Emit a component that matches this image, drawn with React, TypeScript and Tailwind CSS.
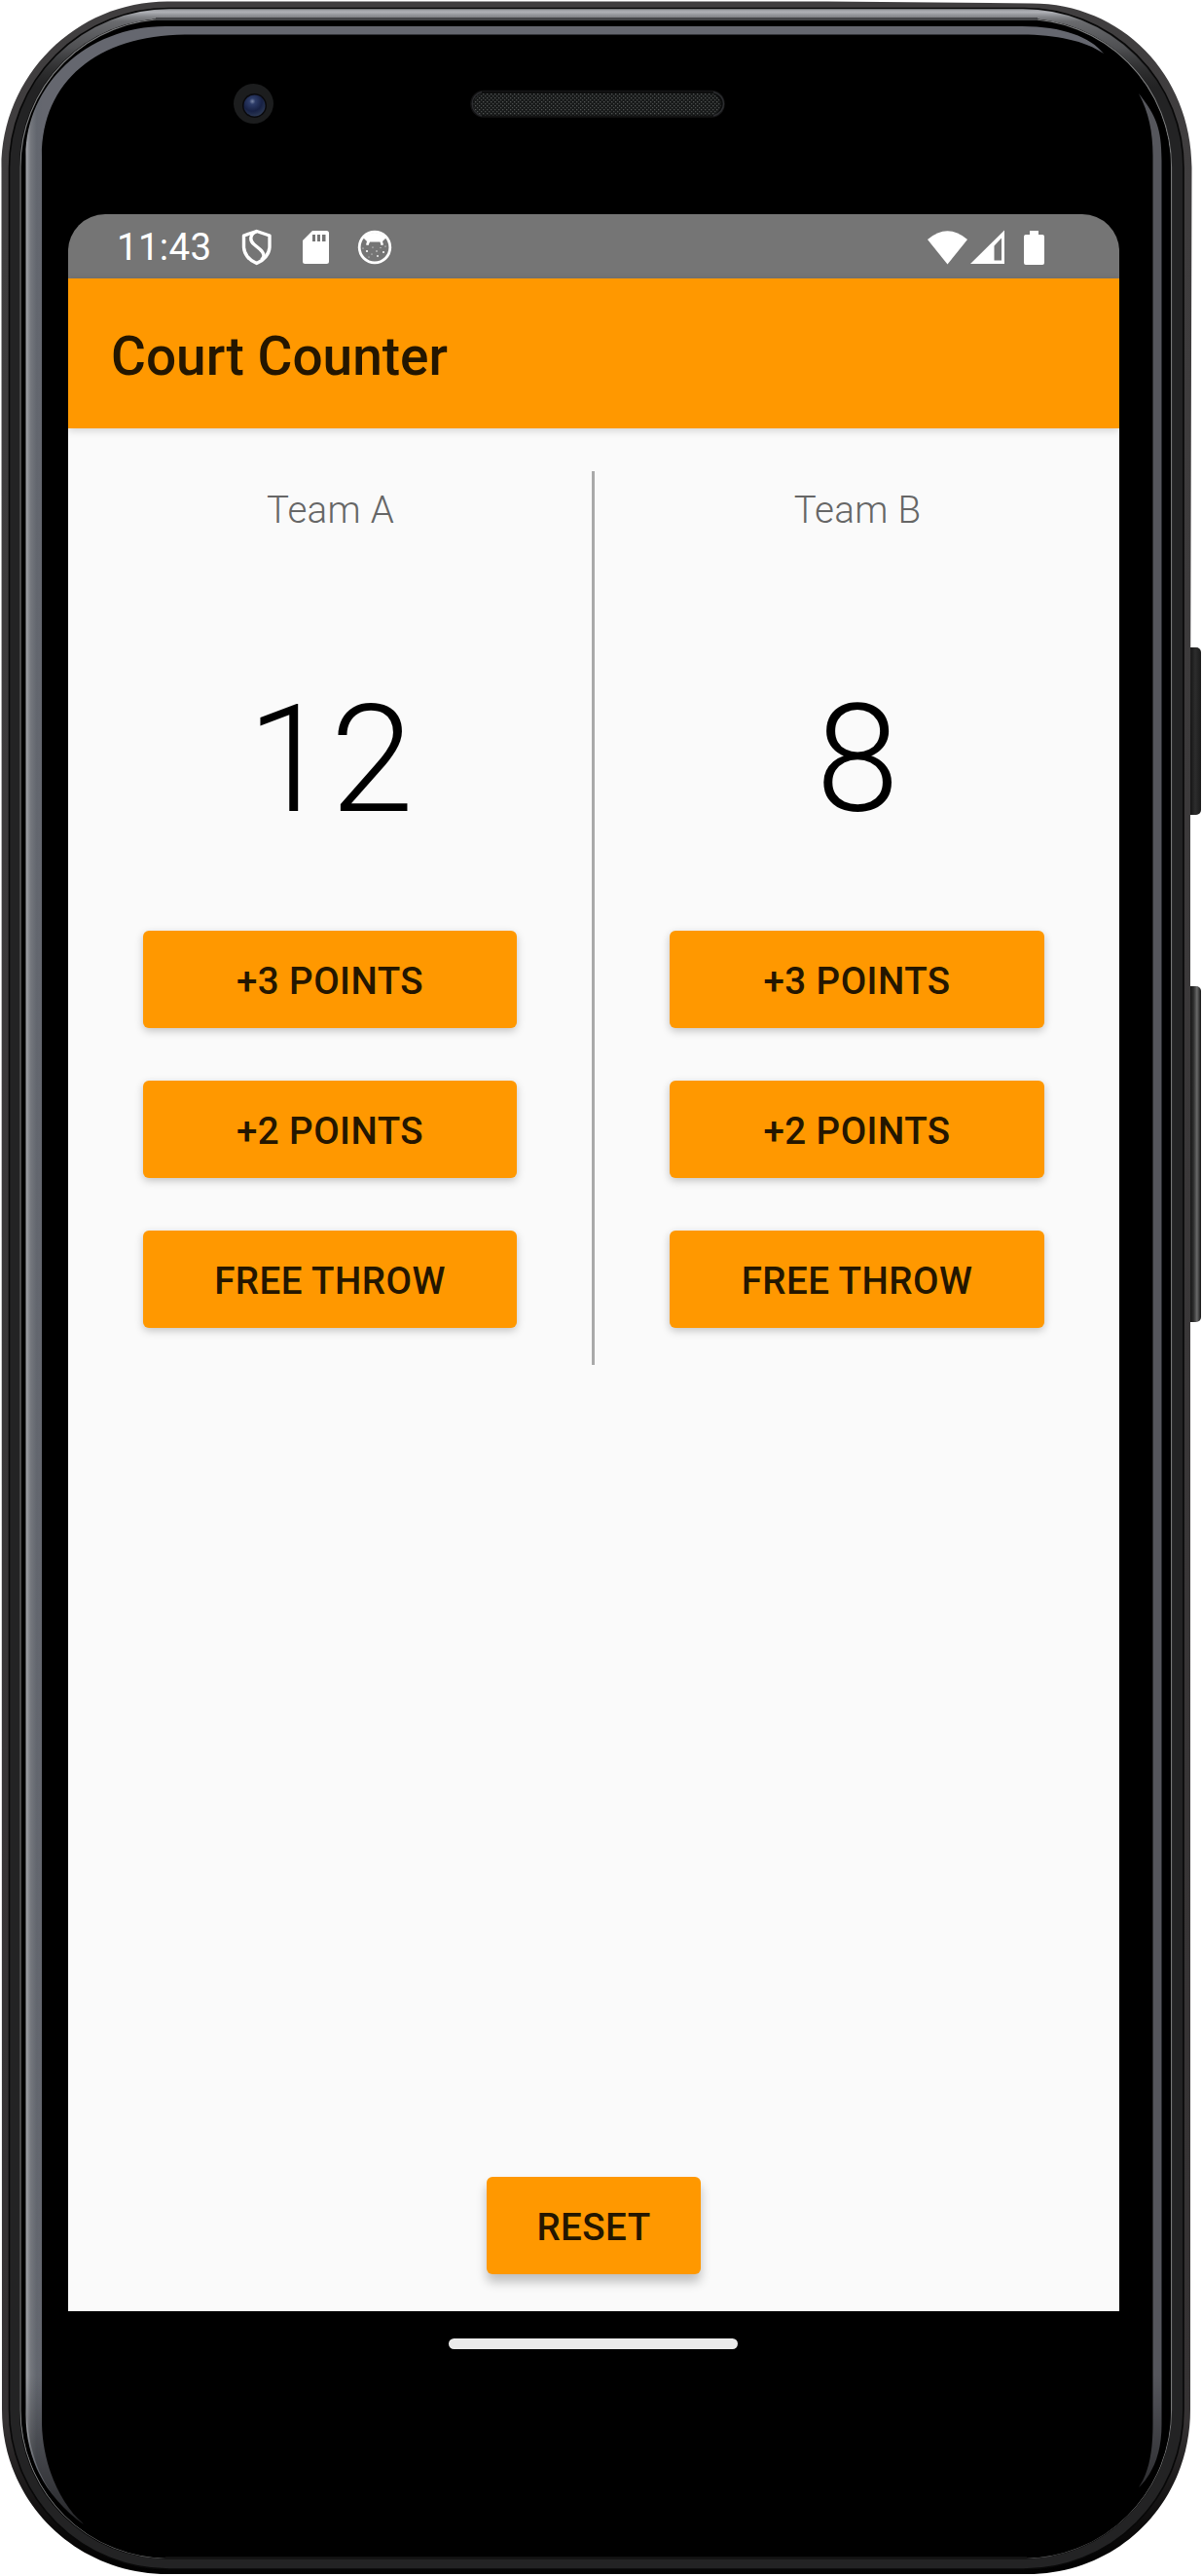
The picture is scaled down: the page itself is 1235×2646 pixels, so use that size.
import { useState } from "react";

function PhoneHardware() {
  return (
    <svg
      className="absolute inset-0"
      width="1235"
      height="2646"
      viewBox="0 0 1235 2646"
      fill="none"
      aria-hidden="true"
    >
      <defs>
        <linearGradient id="rim" x1="0" y1="0" x2="0" y2="2646" gradientUnits="userSpaceOnUse">
          <stop offset="0" stopColor="#403e3f" />
          <stop offset="0.94" stopColor="#353233" />
          <stop offset="0.98" stopColor="#0c0b0b" />
          <stop offset="1" stopColor="#000" />
        </linearGradient>
        <linearGradient id="glow" x1="0" y1="9" x2="0" y2="90" gradientUnits="userSpaceOnUse">
          <stop offset="0" stopColor="#8a8c90" />
          <stop offset="0.04" stopColor="#b0b2b7" />
          <stop offset="0.1" stopColor="#85878b" />
          <stop offset="0.16" stopColor="#6a6b6e" />
          <stop offset="0.5" stopColor="#5a5b5e" stopOpacity="0.8" />
          <stop offset="1" stopColor="#333" stopOpacity="0" />
        </linearGradient>
        <linearGradient id="edge" x1="26" y1="0" x2="44" y2="0" gradientUnits="userSpaceOnUse">
          <stop offset="0" stopColor="#a9abb0" />
          <stop offset="0.3" stopColor="#75787e" />
          <stop offset="0.65" stopColor="#62666e" />
          <stop offset="1" stopColor="#65676f" />
        </linearGradient>
        <linearGradient id="fade" x1="0" y1="2440" x2="0" y2="2600" gradientUnits="userSpaceOnUse">
          <stop offset="0" stopColor="#000" stopOpacity="0" />
          <stop offset="1" stopColor="#000" stopOpacity="0.65" />
        </linearGradient>
        <linearGradient id="power" x1="1222" y1="0" x2="1234" y2="0" gradientUnits="userSpaceOnUse">
          <stop offset="0" stopColor="#101010" />
          <stop offset="0.5" stopColor="#2d2d2d" />
          <stop offset="1" stopColor="#1b1b1b" />
        </linearGradient>
        <linearGradient id="volume" x1="1222" y1="0" x2="1234" y2="0" gradientUnits="userSpaceOnUse">
          <stop offset="0" stopColor="#101010" />
          <stop offset="0.35" stopColor="#2d2d2d" />
          <stop offset="0.65" stopColor="#696969" />
          <stop offset="1" stopColor="#151515" />
        </linearGradient>
        <radialGradient id="lens" cx="0.4" cy="0.3" r="0.7">
          <stop offset="0" stopColor="#7b88a8" />
          <stop offset="0.2" stopColor="#2d3c68" />
          <stop offset="0.65" stopColor="#172144" />
          <stop offset="1" stopColor="#2b3752" />
        </radialGradient>
        <pattern id="mesh" width="4" height="4" patternUnits="userSpaceOnUse">
          <rect width="4" height="4" fill="#171919" />
          <rect width="1.3" height="1.3" fill="#525554" />
          <rect x="2" y="2" width="1.3" height="1.3" fill="#484b4a" />
        </pattern>
      </defs>

      <rect x="1218" y="665" width="16" height="172" rx="5" fill="url(#power)" />
      <rect x="1218" y="1013" width="16" height="345" rx="5" fill="url(#volume)" />

      <path
        d="M172 1.5H850L1060 3.5C1152 3.5 1224 76 1224.5 172L1223 760V2475C1223 2570 1150 2644 1056 2644H172C78 2644 2 2570 2 2475L1.5 172C1.5 78 78 1.5 172 1.5Z"
        fill="url(#rim)"
      />
      <rect x="9.5" y="8.5" width="1206.5" height="2630.5" rx="164" fill="#232324" stroke="#080808" strokeWidth="1.6" />
      <rect x="15" y="14" width="1195" height="2619" rx="159" stroke="url(#glow)" strokeWidth="9.5" />
      <rect x="20" y="19" width="1184" height="2609.5" rx="152" fill="#000" />
      <rect x="21" y="19.5" width="1182.5" height="2608" rx="152" stroke="#777879" strokeWidth="1.2" />
      <path d="M160 19.5H1066" stroke="#444548" strokeWidth="3" />
      <rect x="23.5" y="22.5" width="1178" height="2604" rx="150" stroke="#000" strokeWidth="3" />
      <path d="M170 2627.5H1055" stroke="#141415" strokeWidth="2.5" />

      <path
        d="M86 2593C50 2567 26.500 2530 26.500 2480V160C26.500 88 88 27 170 27H1050C1092 27 1120 38 1134 55C1115 42 1085 35.500 1050 35.500H190C100 36 43 84 43 160V2490C44 2530 60 2570 86 2593Z"
        fill="url(#edge)"
      />
      <path
        d="M88 2595C48 2567 25 2530 25 2440H44V2490C45 2530 60 2570 88 2595Z"
        fill="url(#fade)"
      />
      <path
        d="M1170 96C1188 119 1193.500 132 1193.500 165V2490C1193.500 2520 1185 2540 1170 2555C1180 2540 1184.500 2520 1184.500 2490V160C1184.500 135 1180 115 1170 96Z"
        fill="#55565c"
      />
      <path
        d="M1194 2440V2490C1194 2520 1186 2540 1169 2556C1180 2540 1184 2520 1184 2440Z"
        fill="url(#fade)"
      />

      <circle cx="260.500" cy="106.500" r="20.500" fill="#1c1d1e" />
      <circle cx="261.500" cy="108.500" r="12.500" fill="#09090c" />
      <circle cx="261.500" cy="108.500" r="11" fill="url(#lens)" />

      <rect x="484" y="93.500" width="260" height="26.500" rx="13" fill="#0c0d0d" stroke="#141415" strokeWidth="1.500" />
      <rect x="486.500" y="96" width="254" height="22.500" rx="11" fill="url(#mesh)" />
      <path d="M495 94.500C482 98 482 115 495 119M733 94.500C747 98 747 115 733 119" stroke="#2c2d30" strokeWidth="1.500" />
    </svg>
  );
}

function ShieldIcon() {
  return (
    <svg width="32" height="38" viewBox="0 0 32 38" fill="none" stroke="#fff" strokeWidth="3.400" strokeLinejoin="round">
      <path d="M15.700 2.500L29 7V18C29 26 23 32.500 15.700 35.500C8 32.500 2.500 26 2.500 18V7Z" />
      <path d="M15.500 3C9 5 8 12 13 16L19 21C24 25.500 24 29 20.500 32" />
    </svg>
  );
}

function SdCardIcon() {
  return (
    <svg width="28" height="36" viewBox="0 0 28 36">
      <path
        fill="#fff"
        fillRule="evenodd"
        d="M10 1H24.500Q27 1 27 3.500V32.500Q27 35 24.500 35H2.500Q0 35 0 32.500V11ZM10 5V12H13V5ZM15 5V12H18V5ZM20 5V12H23.500V5Z"
      />
    </svg>
  );
}

function CookieIcon() {
  return (
    <svg width="36" height="36" viewBox="0 0 36 36">
      <circle cx="18" cy="18" r="15.800" fill="none" stroke="#fff" strokeWidth="2.800" />
      <path
        d="M6 8Q18 -2 30 8L26 12L27 15.500L24.500 16L23.500 12.500H13L11.500 16L9 15.500L10 12Z"
        fill="#fff"
      />
      <g fill="#fff">
        <circle cx="10" cy="22" r="1.100" />
        <circle cx="16" cy="18" r="0.600" />
        <circle cx="20" cy="22" r="0.700" />
        <circle cx="27" cy="23" r="1" />
        <circle cx="6" cy="19" r="0.600" />
        <circle cx="15" cy="25" r="0.600" />
        <circle cx="21" cy="27" r="0.900" />
        <circle cx="24" cy="18.500" r="0.500" />
        <circle cx="12" cy="28" r="0.500" />
        <circle cx="29" cy="17" r="0.600" />
      </g>
    </svg>
  );
}

function WifiIcon() {
  return (
    <svg width="42" height="35" viewBox="0 0 42 35">
      <path d="M0 9Q20.500 -8.500 41 9L20.500 34.500Z" fill="#fff" />
    </svg>
  );
}

function SignalIcon() {
  return (
    <svg width="36" height="36" viewBox="0 0 36 36">
      <path d="M35 0.500V35H0ZM32 8.500L24.500 16.500V31.500H32Z" fill="#fff" fillRule="evenodd" />
    </svg>
  );
}

function BatteryIcon() {
  return (
    <svg width="21" height="35" viewBox="0 0 21 35">
      <path d="M6 0H15V4H19Q21 4 21 6V33Q21 35 19 35H2Q0 35 0 33V6Q0 4 2 4H6Z" fill="#fff" />
    </svg>
  );
}

function StatusBar() {
  return (
    <div className="flex h-[66px] items-center bg-[#757575] pr-[77px] pl-[50px] pt-[2px] text-white">
      <span className="w-[128px] pt-px text-[38.5px] leading-none tracking-[0.3px]">11:43</span>
      <ShieldIcon />
      <div className="w-[31px]" />
      <SdCardIcon />
      <div className="w-[28px]" />
      <CookieIcon />
      <div className="ml-auto flex items-center">
        <WifiIcon />
        <div className="w-[2px]" />
        <SignalIcon />
        <div className="w-[19px]" />
        <BatteryIcon />
      </div>
    </div>
  );
}

const buttonClass =
  "flex h-[100px] items-center justify-center rounded-[6px] bg-[#ff9800] pt-[5px] text-[38.5px] leading-none font-medium tracking-[0.45px] text-[#241600]";

type TeamProps = { name: string; score: number; onAdd: (points: number) => void };

function TeamPanel({ name, score, onAdd }: TeamProps) {
  const actions: [string, number][] = [
    ["+3 POINTS", 3],
    ["+2 POINTS", 2],
    ["FREE THROW", 1],
  ];
  return (
    <>
      <h2 className="mt-[17px] pl-px text-center text-[38.5px] leading-[45px] font-light tracking-[0.3px] text-[#666]">
        {name}
      </h2>
      <p className="mt-[145px] pl-px text-center text-[154px] leading-[180px] font-light text-black">{score}</p>
      <div className="mt-[85px] flex flex-col gap-[54px] px-[77px]">
        {actions.map(([label, points]) => (
          <button
            key={label}
            type="button"
            className={buttonClass + " shadow-[0_3px_8px_rgba(0,0,0,0.22)]"}
            onClick={() => onAdd(points)}
          >
            {label}
          </button>
        ))}
      </div>
    </>
  );
}

export default function App() {
  const [scoreA, setScoreA] = useState(12);
  const [scoreB, setScoreB] = useState(8);

  return (
    <main className="relative h-[2646px] w-[1235px] overflow-hidden bg-white pt-[220px] pl-[70px] font-['Roboto',sans-serif]">
      <PhoneHardware />
      <div className="relative flex h-[2220px] w-[1080px] flex-col overflow-hidden rounded-t-[38px]">
        <StatusBar />
        <header className="z-10 flex h-[154px] items-center bg-[#ff9800] pl-[44px] shadow-[0_2px_8px_rgba(0,0,0,0.17)]">
          <h1 className="pt-[6px] text-[55px] leading-none font-medium text-[#241600]">Court Counter</h1>
        </header>
        <div className="flex flex-1 flex-col items-center bg-[#fafafa] pt-[44px] pb-[38px]">
          <div className="flex h-[918px] w-full">
            <section className="w-[538px]">
              <TeamPanel name="Team A" score={scoreA} onAdd={(n) => setScoreA(scoreA + n)} />
            </section>
            <div className="w-[3px] bg-[#a9a9a9]" />
            <section className="w-[539px]">
              <TeamPanel name="Team B" score={scoreB} onAdd={(n) => setScoreB(scoreB + n)} />
            </section>
          </div>
          <button
            type="button"
            className={buttonClass + " mt-auto w-[220px] shadow-[0_8px_11px_rgba(0,0,0,0.24)]"}
            onClick={() => {
              setScoreA(0);
              setScoreB(0);
            }}
          >
            RESET
          </button>
        </div>
        <nav className="flex h-[66px] items-center justify-center bg-black pr-px">
          <div className="h-[11px] w-[297px] rounded-full bg-[#ebebeb]" />
        </nav>
      </div>
    </main>
  );
}
